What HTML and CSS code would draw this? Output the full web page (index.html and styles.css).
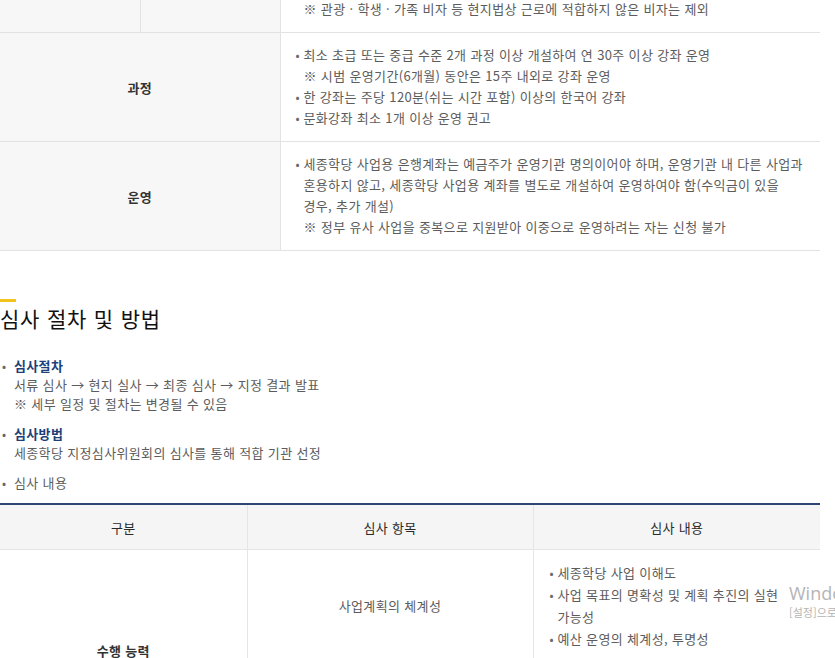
FILE: index.html
```html
<!DOCTYPE html>
<html lang="ko">
<head>
    <meta charset="UTF-8">
    <meta name="viewport" content="width=device-width, initial-scale=1.0">
    <title>세종학당 지정 공모 안내</title>
    <link rel="stylesheet" href="styles.css">
</head>
<body>
    <div class="page">
        <!-- 신청 자격 표 (이어지는 부분) -->
        <table class="info-table">
            <colgroup>
                <col class="col-label">
                <col class="col-sub">
                <col class="col-desc">
            </colgroup>
            <tr class="row-cut">
                <th></th>
                <th class="sub-label"></th>
                <td class="desc">
                    <p class="note">※ 관광 · 학생 · 가족 비자 등 현지법상 근로에 적합하지 않은 비자는 제외</p>
                </td>
            </tr>
            <tr>
                <th colspan="2">과정</th>
                <td class="desc">
                    <ul class="dot-list">
                        <li>최소 초급 또는 중급 수준 2개 과정 이상 개설하여 연 30주 이상 강좌 운영</li>
                        <li class="note">※ 시범 운영기간(6개월) 동안은 15주 내외로 강좌 운영</li>
                        <li>한 강좌는 주당 120분(쉬는 시간 포함) 이상의 한국어 강좌</li>
                        <li>문화강좌 최소 1개 이상 운영 권고</li>
                    </ul>
                </td>
            </tr>
            <tr>
                <th colspan="2">운영</th>
                <td class="desc">
                    <ul class="dot-list">
                        <li>세종학당 사업용 은행계좌는 예금주가 운영기관 명의이어야 하며, 운영기관 내 다른 사업과 혼용하지 않고, 세종학당 사업용 계좌를 별도로 개설하여 운영하여야 함(수익금이 있을 경우, 추가 개설)</li>
                        <li class="note">※ 정부 유사 사업을 중복으로 지원받아 이중으로 운영하려는 자는 신청 불가</li>
                    </ul>
                </td>
            </tr>
        </table>

        <h2 class="section-title">심사 절차 및 방법</h2>

        <ul class="check-list">
            <li>
                <strong>심사절차</strong>
                <p>서류 심사 → 현지 실사 → 최종 심사 → 지정 결과 발표</p>
                <p>※ 세부 일정 및 절차는 변경될 수 있음</p>
            </li>
            <li>
                <strong>심사방법</strong>
                <p>세종학당 지정심사위원회의 심사를 통해 적합 기관 선정</p>
            </li>
            <li>심사 내용</li>
        </ul>

        <table class="review-table">
            <colgroup>
                <col class="col-group">
                <col class="col-item">
                <col class="col-content">
            </colgroup>
            <thead>
                <tr>
                    <th>구분</th>
                    <th>심사 항목</th>
                    <th>심사 내용</th>
                </tr>
            </thead>
            <tbody>
                <tr>
                    <th rowspan="2">수행 능력</th>
                    <td class="item">사업계획의 체계성</td>
                    <td>
                        <ul class="dot-list">
                            <li>세종학당 사업 이해도</li>
                            <li>사업 목표의 명확성 및 계획 추진의 실현 가능성</li>
                            <li>예산 운영의 체계성, 투명성</li>
                        </ul>
                    </td>
                </tr>
                <tr class="row-next">
                    <td class="item"></td>
                    <td></td>
                </tr>
            </tbody>
        </table>

        <div class="watermark">
            <p class="wm-title">Windows 정품 인증</p>
            <p class="wm-text">[설정]으로 이동하여 Windows를 정품 인증합니다.</p>
        </div>
    </div>
</body>
</html>
```

FILE: styles.css
```css
html {
    overflow: hidden;
}

body {
    margin: 0;
    padding: 0;
    font-family: "Noto Sans CJK KR", "Noto Sans", sans-serif;
    font-size: 13px;
    letter-spacing: 0.35px;
    color: #5c5c5c;
    background-color: #fff;
    word-break: keep-all;
}

p, ul {
    margin: 0;
    padding: 0;
}

ul {
    list-style: none;
}

.page {
    position: relative;
    width: 820px;
}

table {
    width: 100%;
    border-collapse: collapse;
    table-layout: fixed;
}

/* 상단 신청 자격 표 */
.col-label {
    width: 140px;
}

.col-sub {
    width: 140px;
}

.info-table th {
    background-color: #f7f7f7;
    color: #333;
    font-weight: 700;
    text-align: center;
    border-bottom: 1px solid #e3e3e3;
    border-right: 1px solid #e3e3e3;
}

.info-table .desc {
    padding: 11px 12px 13px 15px;
    line-height: 21px;
    border-bottom: 1px solid #e3e3e3;
    vertical-align: top;
}

.info-table .row-cut .desc {
    padding-top: 0;
    padding-bottom: 14px;
}

.row-cut .note {
    padding-left: 8px;
    line-height: 18px;
}

.dot-list li {
    position: relative;
    padding-left: 8px;
}

.dot-list li::before {
    content: "•";
    position: absolute;
    left: 0;
    top: 0;
    font-size: 12px;
    color: #6a6a6a;
}

.dot-list li.note::before {
    content: none;
}

/* 심사 절차 및 방법 */
.section-title {
    margin: 48px 0 0;
    font-size: 21px;
    line-height: 28px;
    font-weight: 400;
    letter-spacing: 0.8px;
    color: #111;
}

.section-title::before {
    content: "";
    display: block;
    width: 16px;
    height: 3px;
    margin-bottom: 2px;
    background-color: #f2c31b;
}

.check-list {
    margin: 24px 0 5px;
    line-height: 19px;
}

.check-list li {
    position: relative;
    padding-left: 14px;
    margin-bottom: 11px;
}

.check-list li::before {
    content: "•";
    position: absolute;
    left: 2px;
    top: 0;
    font-size: 12px;
    color: #666;
}

.check-list strong {
    display: block;
    color: #1e3f78;
}

/* 심사 내용 표 */
.col-group {
    width: 247px;
}

.col-item {
    width: 286px;
}

.review-table {
    border-top: 2px solid #2b4675;
}

.review-table thead th {
    height: 44px;
    padding: 0;
    background-color: #f5f5f5;
    color: #2a2a2a;
    font-weight: 400;
    font-size: 13px;
    border-right: 1px solid #e5e5e5;
    border-bottom: 1px solid #e5e5e5;
}

.review-table thead th:last-child {
    border-right: none;
}

.review-table tbody th {
    font-weight: 700;
    color: #333;
    border-right: 1px solid #e5e5e5;
    border-bottom: 1px solid #e5e5e5;
}

.review-table td {
    padding: 12px 16px;
    line-height: 22px;
    border-bottom: 1px solid #e5e5e5;
}

.review-table .item {
    text-align: center;
    border-right: 1px solid #e5e5e5;
}

.review-table .row-next td {
    height: 64px;
}

/* 정품 인증 안내 문구 */
.watermark {
    position: absolute;
    left: 789px;
    top: 582px;
    white-space: nowrap;
    color: #b4b4b4;
}

.wm-title {
    font-family: "Open Sans", "Noto Sans", sans-serif;
    font-size: 18px;
    font-weight: 400;
    letter-spacing: 0;
    line-height: 22px;
}

.wm-text {
    font-size: 11px;
    letter-spacing: 0;
    line-height: 16px;
}
```
